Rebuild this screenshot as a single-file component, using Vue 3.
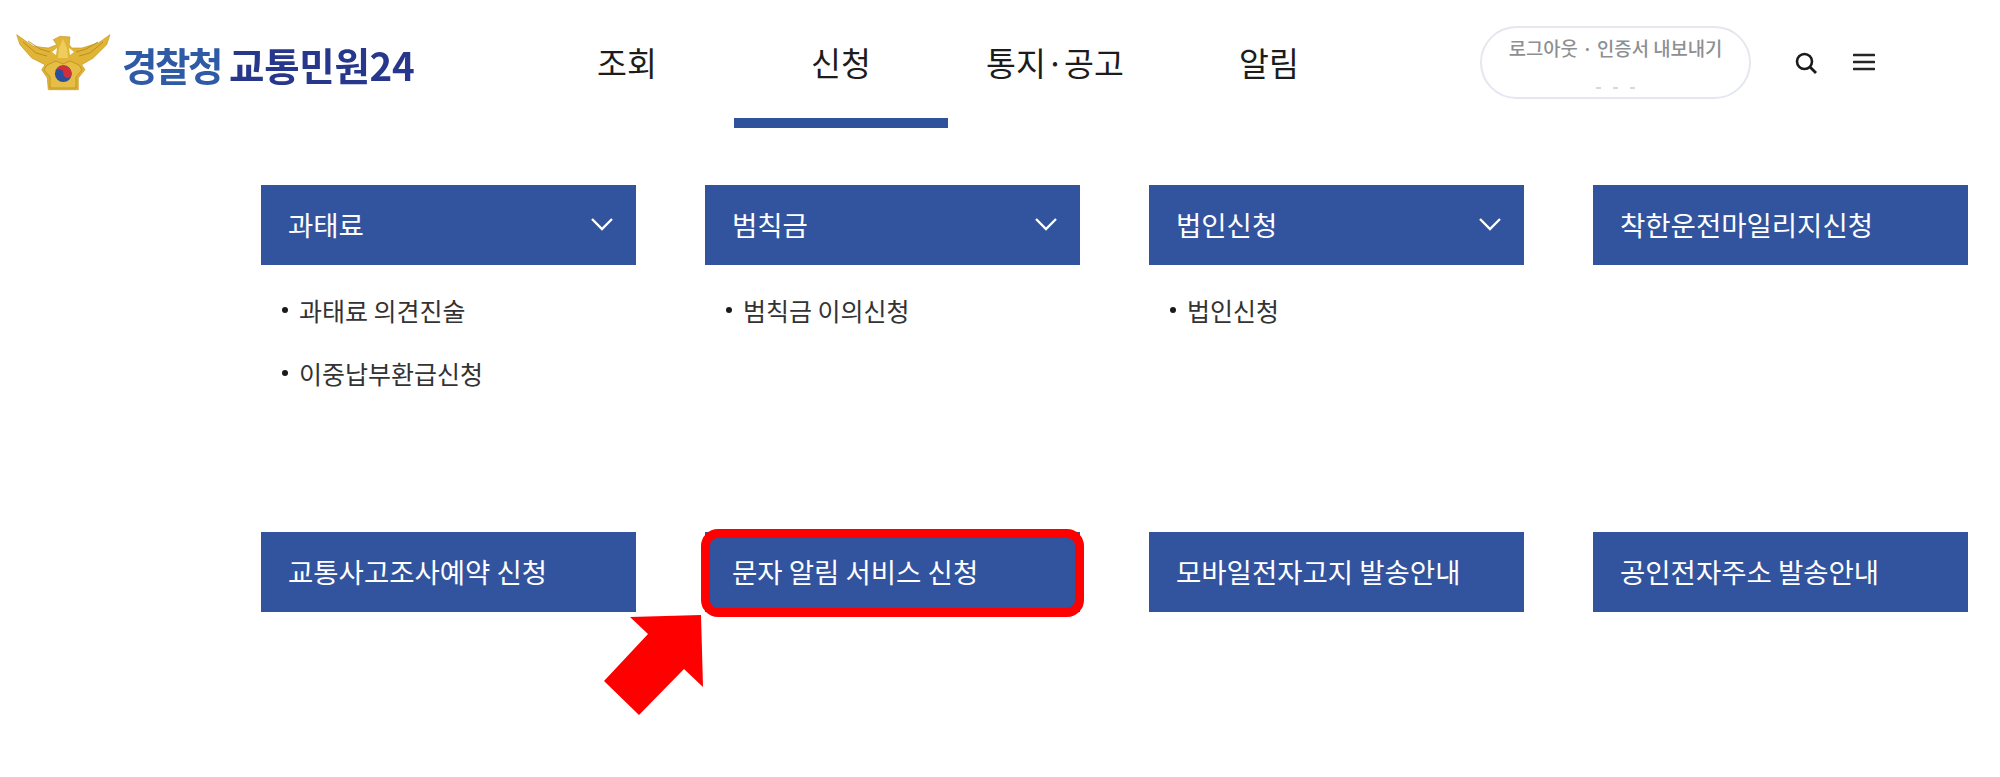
<script setup>
const navItems = [
  { label: '조회', active: false },
  { label: '신청', active: true },
  { label: '통지·공고', active: false },
  { label: '알림', active: false },
]
const cards = [
  { title: '과태료', chevron: true, items: ['과태료 의견진술', '이중납부환급신청'] },
  { title: '범칙금', chevron: true, items: ['범칙금 이의신청'] },
  { title: '법인신청', chevron: true, items: ['법인신청'] },
  { title: '착한운전마일리지신청', chevron: false, items: [] },
  { title: '교통사고조사예약 신청', chevron: false, items: [] },
  { title: '문자 알림 서비스 신청', chevron: false, items: [], marked: true },
  { title: '모바일전자고지 발송안내', chevron: false, items: [] },
  { title: '공인전자주소 발송안내', chevron: false, items: [] },
]
</script>

<template>
  <div class="page">
    <header class="header">
      <a class="logo">
        <svg class="emblem" viewBox="0 0 96 60" width="96" height="60" aria-hidden="true">
          <path d="M0.7 0.7 L17.3 12.3 L32.3 14 L40.7 10.7 L37.3 5.7 L44 2.3 L54 3 L53.3 10.7 L55.7 14 L65.7 14 L82.3 9 L94 0.7 L90.7 10.7 L77.3 24 L65.7 30.7 L69 35.7 L62.3 44 L62.3 55.7 L32.3 55.7 L31.3 44 L25.7 35.7 L29 30.7 L15.7 24 L4 10.7 Z" fill="#e0b437" stroke="#c99c26" stroke-width=".7" stroke-linejoin="round"/>
          <path d="M7 8 L20 19 L31 22 M12 7 L24 15 L34 18 M87 8 L74 19 L63 22 M82 8 L70 15 L60 18" fill="none" stroke="#b58a1d" stroke-width=".9"/>
          <path d="M36 18 L41 14 L40 21 Z M58 18 L53 14 L54 21 Z" fill="#fff"/>
          <path d="M47 5 L43 14 L42 24 L52 24 L51 14 Z" fill="#efcd5c"/>
          <path d="M31 31 L40 27 L47 30 L54 27 L63 31 L66 36 L60 43 L60 54 L34 54 L34 43 L28 36 Z" fill="#e6be45" stroke="#b58a1b" stroke-width=".7"/>
          <circle cx="47.3" cy="39.7" r="8.4" fill="#2a4f9e"/>
          <path d="M39 38.6 A8.4 8.4 0 0 1 55.7 39.7 A4.2 4.2 0 0 1 47.3 39.7 A4.2 4.2 0 0 0 39 38.6 Z" fill="#d22f3c"/>
        </svg>
        <span class="logo-text"><span class="logo-a">경찰청</span><span class="logo-b">교통민원24</span></span>
      </a>
      <nav class="nav">
        <a v-for="item in navItems" :key="item.label" class="nav-item" :class="{ active: item.active }">{{ item.label }}</a>
      </nav>
      <div class="pill">
        <span class="pill-text">로그아웃 · 인증서 내보내기</span>
        <span class="pill-dots"><i></i><i></i><i></i></span>
      </div>
      <svg class="icon search" viewBox="0 0 24 24" width="24" height="24" aria-hidden="true">
        <circle cx="10.5" cy="10.5" r="7.5" fill="none" stroke="#1a1a1a" stroke-width="2.6"/>
        <path d="M16 16 L22 22" stroke="#1a1a1a" stroke-width="2.8" fill="none"/>
      </svg>
      <svg class="icon menu" viewBox="0 0 22 18" width="22" height="18" aria-hidden="true">
        <path d="M1 2 H21 M1 9 H21 M1 16 H21" stroke="#262626" stroke-width="2.6" stroke-linecap="round" fill="none"/>
      </svg>
    </header>

    <main class="grid">
      <section v-for="card in cards" :key="card.title" class="cell">
        <div class="card" :class="{ marked: card.marked }">
          <span class="card-title">{{ card.title }}</span>
          <svg v-if="card.chevron" class="chev" viewBox="0 0 24 14" width="24" height="14" aria-hidden="true">
            <path d="M2 2 L12 12 L22 2" fill="none" stroke="#fff" stroke-width="2.4"/>
          </svg>
          <svg v-if="card.marked" class="arrow" viewBox="0 0 100 101" width="100" height="101" aria-hidden="true">
            <path d="M26 2 L97 0 L99 72 L80 54 L35 100 L0 66 L44 19 Z" fill="#ff0000"/>
          </svg>
        </div>
        <ul v-if="card.items.length" class="list">
          <li v-for="it in card.items" :key="it">{{ it }}</li>
        </ul>
      </section>
    </main>
  </div>
</template>

<style scoped>
.page {
  width: 2000px;
  height: 777px;
  overflow: hidden;
  background: #fff;
  font-family: "Noto Sans CJK KR", "Noto Sans", sans-serif;
  color: #222;
}
.header {
  display: flex;
  align-items: flex-start;
  height: 185px;
  box-sizing: border-box;
}
.logo {
  display: flex;
  align-items: flex-start;
  width: 520px;
  flex: none;
  padding: 34px 0 0 16px;
  box-sizing: border-box;
  filter: blur(.6px);
}
.emblem { flex: none; }
.logo-text {
  margin: 5px 0 0 10px;
  font-size: 38.5px;
  line-height: 50px;
  font-weight: 700;
  white-space: nowrap;
}
.logo-a { color: #2f5ba6; letter-spacing: -2.4px; margin-right: 8px; }
.logo-b { color: #27388c; letter-spacing: -0.3px; }
.nav {
  display: grid;
  grid-template-columns: repeat(4, 214px);
  flex: none;
}
.nav-item {
  display: block;
  height: 128px;
  box-sizing: border-box;
  padding-top: 38px;
  text-align: center;
  font-size: 32.5px;
  line-height: 48px;
  color: #1c1c1c;
  white-space: nowrap;
}
.nav-item.active { border-bottom: 10px solid #2f529c; }
.pill {
  flex: none;
  width: 271px;
  height: 73px;
  margin: 26px 0 0 104px;
  box-sizing: border-box;
  border: 2px solid #e4e7f0;
  border-radius: 37px;
  text-align: center;
  overflow: hidden;
}
.pill-text {
  display: block;
  font-size: 18.8px;
  line-height: 24px;
  margin-top: 8px;
  font-weight: 500;
  color: #8d8f93;
  white-space: nowrap;
}
.pill-dots {
  display: flex;
  justify-content: center;
  gap: 12px;
  margin-top: 27px;
}
.pill-dots i {
  width: 5px;
  height: 2px;
  background: #d6d8dd;
}
.icon { flex: none; }
.search { margin: 51px 0 0 43px; }
.menu { margin: 53px 0 0 35px; }
.grid {
  display: grid;
  grid-template-columns: repeat(4, 375px);
  grid-auto-rows: 347px;
  column-gap: 69px;
  padding-left: 261px;
}
.card {
  position: relative;
  display: flex;
  align-items: center;
  justify-content: space-between;
  height: 80px;
  padding: 0 22px 0 27px;
  background: #32549e;
  color: #fff;
  font-size: 27.5px;
  white-space: nowrap;
}
.card-title { padding-bottom: 3px; }
.chev { flex: none; margin-bottom: 2px; }
.card.marked::after {
  content: "";
  position: absolute;
  inset: -3px -4px -5px -4px;
  border: 9px solid #ff0000;
  border-radius: 17px;
  pointer-events: none;
}
.arrow {
  position: absolute;
  left: -101px;
  top: 83px;
}
.list {
  list-style: none;
  margin: 0;
  padding: 14px 0 0 38px;
}
.list li {
  position: relative;
  height: 62.5px;
  font-size: 25px;
  line-height: 62.5px;
  color: #333;
  white-space: nowrap;
}
.list li::before {
  content: "";
  position: absolute;
  left: -17px;
  top: 28px;
  width: 6px;
  height: 6px;
  border-radius: 50%;
  background: #1a1a1a;
}
</style>
